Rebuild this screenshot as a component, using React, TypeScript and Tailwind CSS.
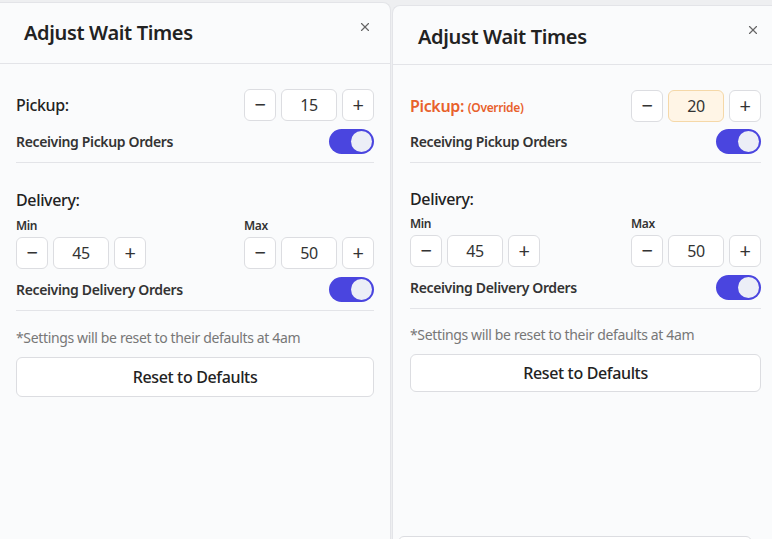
import { X } from "lucide-react";

interface StepperProps {
  value: number;
  override?: boolean;
}

function Stepper({ value, override }: StepperProps) {
  return (
    <div className="flex items-center gap-[5px]">
      <button className="flex h-8 w-8 items-center justify-center rounded-md border border-[#dcdde1] bg-white text-[20px] leading-none text-[#333]">
        −
      </button>
      <div
        className={
          override
            ? "flex h-8 w-14 items-center justify-center rounded-md border border-[#f5d8a8] bg-[#fff5e6] text-[16px] text-[#333]"
            : "flex h-8 w-14 items-center justify-center rounded-md border border-[#dcdde1] bg-white text-[16px] text-[#333]"
        }
      >
        {value}
      </div>
      <button className="flex h-8 w-8 items-center justify-center rounded-md border border-[#dcdde1] bg-white text-[20px] leading-none text-[#333]">
        +
      </button>
    </div>
  );
}

function Toggle() {
  return (
    <div className="flex h-[25px] w-[45px] items-center justify-end rounded-full bg-[#4a45df] pr-[2px]">
      <div className="h-[21px] w-[21px] rounded-full bg-[#eceef7]" />
    </div>
  );
}

interface PanelProps {
  pickup: number;
  override?: boolean;
  right?: boolean;
}

function Panel({ pickup, override, right }: PanelProps) {
  return (
    <div
      className={
        right
          ? "flex w-[386px] shrink-0 flex-col overflow-hidden rounded-tl-lg border-l border-t border-[#e3e4e8] bg-[#fafbfc] mt-[5px]"
          : "flex w-[391px] shrink-0 flex-col overflow-hidden rounded-tr-lg border-r border-t border-[#e3e4e8] bg-[#fafbfc] mt-[2px]"
      }
    >
      {/* cabeçalho */}
      <div
        className={
          right
            ? "flex h-[59px] shrink-0 items-start justify-between border-b border-[#e3e4e8] pl-[25px] pr-[18px]"
            : "flex h-[61px] shrink-0 items-start justify-between border-b border-[#e3e4e8] pl-[24px] pr-[18px]"
        }
      >
        <h1 className={right ? "pt-[16px] text-[20px] font-semibold text-[#222]" : "pt-[15px] text-[20px] font-semibold text-[#222]"}>
          Adjust Wait Times
        </h1>
        <X className="mt-[17px] h-[14px] w-[14px] text-[#666]" strokeWidth={2} />
      </div>

      <div className={right ? "flex shrink-0 flex-col pl-[17px] pr-[17px] pt-[25px]" : "flex shrink-0 flex-col px-4 pt-[25px]"}>
        {/* Pickup */}
        <div className="flex h-8 items-center justify-between">
          {override ? (
            <span className="text-[16px] font-semibold text-[#e8612c]">
              Pickup: <span className="text-[12px]">(Override)</span>
            </span>
          ) : (
            <span className="text-[16px] font-medium text-[#222]">Pickup:</span>
          )}
          <Stepper value={pickup} override={override} />
        </div>
        <div className={right ? "mt-[7px] flex items-center justify-between border-b border-[#e3e4e8] pb-2" : "mt-2 flex items-center justify-between border-b border-[#e3e4e8] pb-2"}>
          <span className="text-[14px] font-semibold text-[#333]">Receiving Pickup Orders</span>
          <Toggle />
        </div>

        {/* Delivery */}
        <span className={right ? "mt-[24px] text-[16px] font-medium leading-6 text-[#222]" : "mt-[25px] text-[16px] font-medium leading-6 text-[#222]"}>
          Delivery:
        </span>
        <div className={right ? "mt-[5px] flex justify-between" : "mt-[6px] flex justify-between"}>
          <div className="flex flex-col">
            <span className="text-[12px] font-semibold leading-4 text-[#333]">Min</span>
            <div className="mt-[3px]">
              <Stepper value={45} />
            </div>
          </div>
          <div className="flex flex-col">
            <span className="text-[12px] font-semibold leading-4 text-[#333]">Max</span>
            <div className="mt-[3px]">
              <Stepper value={50} />
            </div>
          </div>
        </div>
        <div className="mt-2 flex items-center justify-between border-b border-[#e3e4e8] pb-2">
          <span className="text-[14px] font-semibold text-[#333]">Receiving Delivery Orders</span>
          <Toggle />
        </div>

        <p className={right ? "mt-4 text-[14px] leading-5 text-[#777]" : "mt-[17px] text-[14px] leading-5 text-[#777]"}>
          *Settings will be reset to their defaults at 4am
        </p>
        <button
          className={
            right
              ? "mt-[9px] h-[38px] rounded-md border border-[#dcdde1] bg-white text-[16px] font-medium text-[#222]"
              : "mt-[9px] h-[40px] rounded-md border border-[#dcdde1] bg-white text-[16px] font-medium text-[#222]"
          }
        >
          Reset to Defaults
        </button>
        {right && <div className="mt-[144px] mr-[9px] ml-[-12px] h-10 rounded-md border border-[#dcdde1] bg-white" />}
      </div>
    </div>
  );
}

export default function App() {
  return (
    <div
      className="flex h-[539px] w-[772px] gap-[1px] overflow-hidden bg-[#eeeff1] tracking-[-0.022em]"
      style={{ fontFamily: '"Noto Sans", "Open Sans", sans-serif' }}
    >
      <Panel pickup={15} />
      <Panel pickup={20} override right />
    </div>
  );
}
